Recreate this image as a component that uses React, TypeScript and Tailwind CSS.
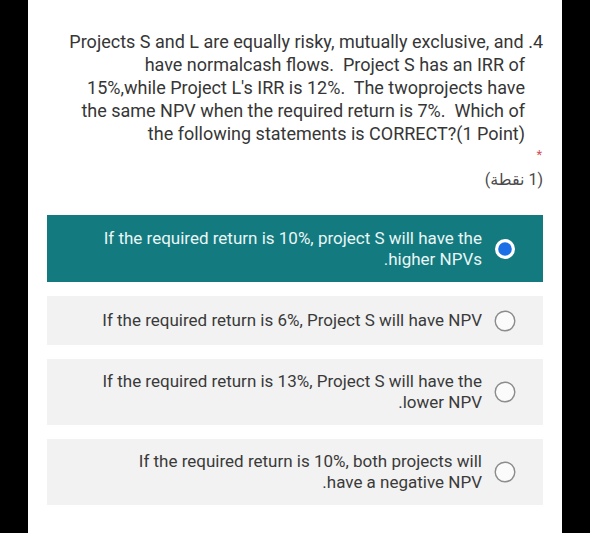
import React from "react";

const font = { fontFamily: "Roboto, 'DejaVu Sans', 'Noto Sans', sans-serif" };

function Radio({ selected }: { selected?: boolean }) {
  if (selected) {
    return (
      <svg width="22" height="22" viewBox="0 0 22 22" className="shrink-0">
        <circle cx="11" cy="11" r="10" fill="#ffffff" />
        <circle cx="11" cy="11" r="6.8" fill="#1a6fe6" />
      </svg>
    );
  }
  return (
    <svg width="22" height="22" viewBox="0 0 22 22" className="shrink-0">
      <circle cx="11" cy="11" r="9.8" fill="#fbfbfb" stroke="#8c8c8c" strokeWidth="1.4" />
    </svg>
  );
}

function Option({
  lines,
  selected,
  h,
}: {
  lines: string[];
  selected?: boolean;
  h: string;
}) {
  return (
    <div
      className={`flex items-center justify-end gap-[12px] pr-[27px] ${h} ${
        selected ? "bg-[#137a7f] text-[#e9f6f6]" : "bg-[#f2f2f2] text-[#3a3a3a]"
      }`}
    >
      <div className="text-right text-[17px] leading-[21px]">
        {lines.map((l, i) => (
          <div key={i} className="whitespace-nowrap">
            {l}
          </div>
        ))}
      </div>
      <Radio selected={selected} />
    </div>
  );
}

export default function App() {
  return (
    <div className="flex h-[533px] w-[590px] bg-black" style={font}>
      <div className="w-[28px] shrink-0 bg-black" />
      <div className="flex-1 bg-white px-[19px] pt-[30px]">
        <div className="text-right text-[18px] leading-[23px] text-[#363636]">
          <div className="whitespace-nowrap">
            Projects S and L are equally risky, mutually exclusive, and .4
          </div>
          <div className="pr-[18px]">
            <div className="whitespace-nowrap">have normalcash flows.&nbsp; Project S has an IRR of</div>
            <div className="whitespace-nowrap">15%,while Project L's IRR is 12%.&nbsp; The twoprojects have</div>
            <div className="whitespace-nowrap">the same NPV when the required return is 7%.&nbsp; Which of</div>
            <div className="whitespace-nowrap">the following statements is CORRECT?(1 Point)</div>
          </div>
        </div>
        <div className="h-[20px] pr-[1px] text-right text-[13px] leading-[20px] text-[#d0505a]">
          *
        </div>
        <div className="h-[30px] text-right text-[16px] leading-[30px] text-[#4a4a4a]">
          <span dir="rtl">(1 نقطة)</span>
        </div>
        <div className="mt-[20px] flex flex-col gap-[14px]">
          <Option
            selected
            h="h-[67px]"
            lines={["If the required return is 10%, project S will have the", ".higher NPVs"]}
          />
          <Option h="h-[49px]" lines={["If the required return is 6%, Project S will have NPV"]} />
          <Option
            h="h-[66px]"
            lines={["If the required return is 13%, Project S will have the", ".lower NPV"]}
          />
          <Option
            h="h-[66px]"
            lines={["If the required return is 10%, both projects will", ".have a negative NPV"]}
          />
        </div>
      </div>
      <div className="w-[28px] shrink-0 bg-black" />
    </div>
  );
}
